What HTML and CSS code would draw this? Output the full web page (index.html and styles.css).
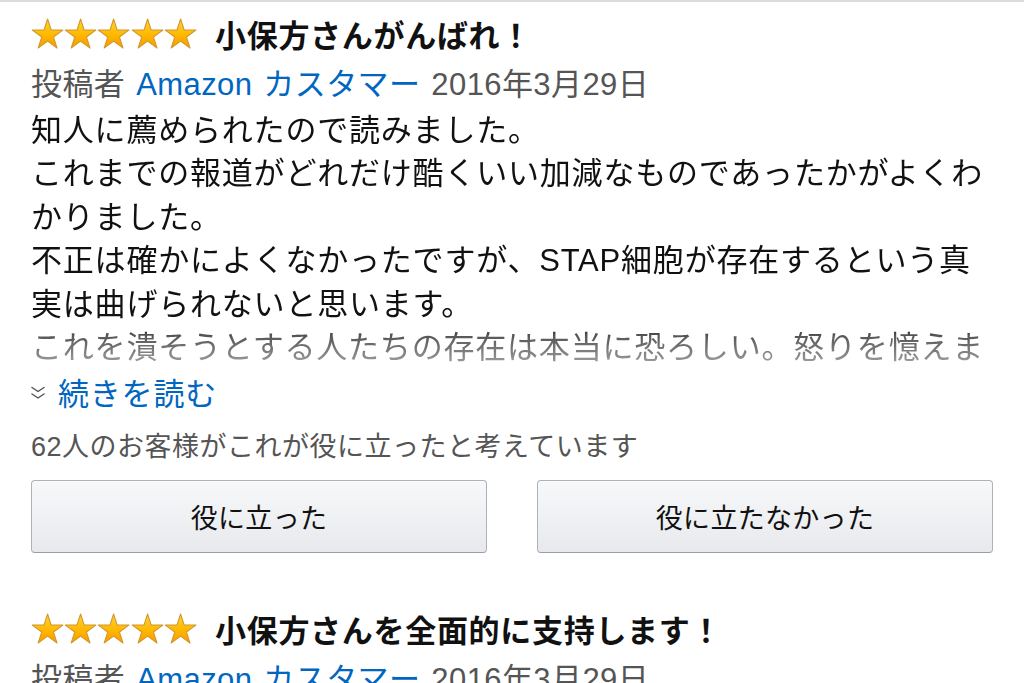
FILE: index.html
```html
<!DOCTYPE html>
<html lang="ja">
<head>
<meta charset="utf-8">
<title>カスタマーレビュー</title>
<link rel="stylesheet" href="styles.css">
</head>
<body>
<svg class="defs" width="0" height="0" aria-hidden="true">
  <defs>
    <linearGradient id="starFill" x1="0" y1="0" x2="0" y2="1">
      <stop offset="0" stop-color="#ffd33a"/>
      <stop offset="0.55" stop-color="#ffb800"/>
      <stop offset="1" stop-color="#f79a00"/>
    </linearGradient>
    <symbol id="star" viewBox="0 0 34 32">
      <polygon points="17,1 20.73,12.47 32.79,12.47 23.03,19.56 26.76,31.03 17,23.94 7.24,31.03 10.97,19.56 1.21,12.47 13.27,12.47" fill="url(#starFill)" stroke="#d0962a" stroke-width="1.1" stroke-linejoin="round"/>
    </symbol>
  </defs>
</svg>
<main class="reviews">
  <article class="review">
    <h2 class="review-title">
      <span class="stars" aria-label="5つ星のうち5.0">
        <svg class="star"><use href="#star"/></svg><svg class="star"><use href="#star"/></svg><svg class="star"><use href="#star"/></svg><svg class="star"><use href="#star"/></svg><svg class="star"><use href="#star"/></svg>
      </span>
      <span class="title-text">小保方さんがんばれ！</span>
    </h2>
    <div class="review-meta">投稿者 <a class="author" href="#">Amazon カスタマー</a> 2016年3月29日</div>
    <div class="review-body">知人に薦められたので読みました。<br>これまでの報道がどれだけ酷くいい加減なものであったかがよくわかりました。<br>不正は確かによくなかったですが、STAP細胞が存在するという真実は曲げられないと思います。<br>これを潰そうとする人たちの存在は本当に恐ろしい。怒りを憶えま</div>
    <a class="read-more" href="#"><svg class="chev" viewBox="0 0 16 16" width="16" height="16"><path d="M2 2.5 L8 6.5 L14 2.5 M2 9 L8 13 L14 9" fill="none" stroke="#555" stroke-width="1.5" stroke-linecap="round" stroke-linejoin="round"/></svg><span>続きを読む</span></a>
    <div class="helpful-count">62人のお客様がこれが役に立ったと考えています</div>
    <div class="vote-row">
      <button class="vote-btn" type="button">役に立った</button>
      <button class="vote-btn" type="button">役に立たなかった</button>
    </div>
  </article>
  <article class="review">
    <h2 class="review-title">
      <span class="stars" aria-label="5つ星のうち5.0">
        <svg class="star"><use href="#star"/></svg><svg class="star"><use href="#star"/></svg><svg class="star"><use href="#star"/></svg><svg class="star"><use href="#star"/></svg><svg class="star"><use href="#star"/></svg>
      </span>
      <span class="title-text">小保方さんを全面的に支持します！</span>
    </h2>
    <div class="review-meta">投稿者 <a class="author" href="#">Amazon カスタマー</a> 2016年3月29日</div>
  </article>
</main>
</body>
</html>
```

FILE: styles.css
```css
html, body {
  margin: 0;
  padding: 0;
  background: #ffffff;
}
body {
  font-family: "Liberation Sans", "Noto Sans CJK JP", sans-serif;
  color: #111111;
  border-top: 2px solid #dcdcdc;
  overflow: hidden;
  height: 681px;
}
.defs {
  position: absolute;
  width: 0;
  height: 0;
}
.reviews {
  padding: 0 31px;
}
.review {
  display: flex;
  flex-direction: column;
  padding-top: 8px;
}
.review + .review {
  margin-top: 44px;
}
.review-title {
  display: flex;
  align-items: center;
  margin: 0;
  height: 46px;
  font-size: 31px;
  font-weight: 700;
  letter-spacing: 0.7px;
}
.stars {
  display: flex;
  width: 166px;
  margin-right: 18px;
}
.star {
  width: 33.2px;
  height: 31px;
  flex: none;
}
.review-meta {
  margin-top: 7px;
  line-height: 43px;
  font-size: 31px;
  letter-spacing: 0.4px;
  word-spacing: 2px;
  color: #555555;
  white-space: nowrap;
}
.author {
  color: #0066c0;
  text-decoration: none;
}
.review-body {
  margin-top: 3px;
  font-size: 31px;
  letter-spacing: 0.8px;
  line-height: 43.4px;
  height: 260.4px;
  overflow: hidden;
  color: #111111;
  -webkit-mask-image: linear-gradient(to bottom, #000 0, #000 217px, rgba(0,0,0,0.72) 226px, rgba(0,0,0,0.35) 260px);
  mask-image: linear-gradient(to bottom, #000 0, #000 217px, rgba(0,0,0,0.72) 226px, rgba(0,0,0,0.35) 260px);
}
.read-more {
  display: flex;
  align-items: center;
  margin-top: 2px;
  height: 40px;
  color: #0066c0;
  text-decoration: none;
  font-size: 31px;
  letter-spacing: 0.8px;
}
.chev {
  flex: none;
  width: 16px;
  height: 16px;
  margin-left: -1px;
  margin-right: 12px;
  margin-top: 4px;
}
.helpful-count {
  margin-top: 19px;
  line-height: 34px;
  font-size: 27px;
  letter-spacing: 0.5px;
  color: #555555;
}
.vote-row {
  display: flex;
  gap: 50px;
  margin-top: 16px;
}
.vote-btn {
  flex: 1;
  height: 73px;
  border: 1px solid #adb1b8;
  border-bottom-color: #9a9ea6;
  border-radius: 4px;
  background: linear-gradient(to bottom, #f7f8fa, #e7e9ec);
  box-shadow: 0 1px 0 rgba(255,255,255,0.6) inset;
  font-family: "Liberation Sans", "Noto Sans CJK JP", sans-serif;
  font-size: 27px;
  color: #111111;
  letter-spacing: 0.3px;
  padding: 0;
}
```
